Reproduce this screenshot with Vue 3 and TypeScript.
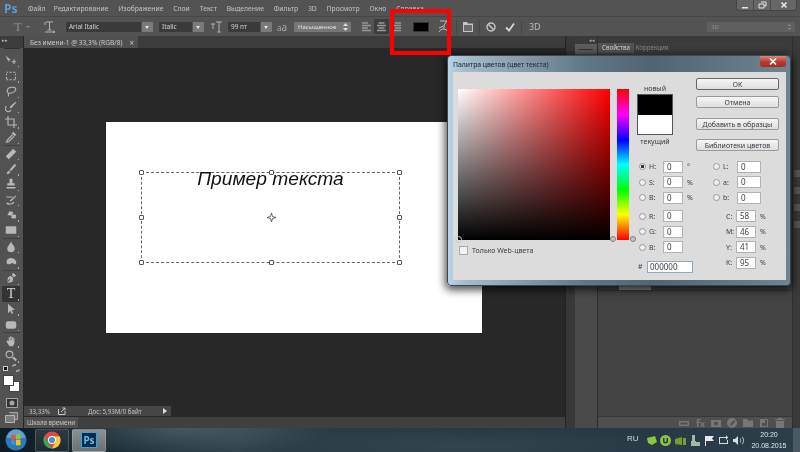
<template>
  <div class="ps">
    <header class="menubar">
      <span class="ps-logo">Ps</span>
      <nav class="menu">
        <span v-for="item in menuItems" :key="item">{{ item }}</span>
      </nav>
      <div class="win-btns">
        <span class="win-btn">
          <svg width="8" height="8" viewBox="0 0 8 8"><path d="M1 6h6v1.500H1z" fill="#e6e6e6" /></svg>
        </span>
        <span class="win-btn">
          <svg width="9" height="8" viewBox="0 0 9 8"><path d="M3 1h5v4H6.500M1 3h5v4H1z" fill="none" stroke="#e6e6e6" /></svg>
        </span>
        <span class="win-btn win-btn--wide">
          <svg width="8" height="8" viewBox="0 0 8 8"><path d="M1.500 1.500l5 5M6.500 1.500l-5 5" stroke="#e6e6e6" stroke-width="1.600" /></svg>
        </span>
      </div>
    </header>

    <div class="options">
      <span class="opt-t">T</span>
      <span class="opt-caret" />
      <svg class="opt-tt" width="12" height="12" viewBox="0 0 12 12">
        <path d="M2 1h7M5.500 1v8M3.500 9h4M1 1v3M1 11h10M9 9.500l2 1.500-2 1" fill="none" stroke="#b4b4b4" />
      </svg>
      <div class="combo combo--font"><span class="combo__val">Arial Italic</span><span class="combo__btn" /></div>
      <div class="combo combo--style"><span class="combo__val">Italic</span><span class="combo__btn" /></div>
      <svg class="opt-size" width="12" height="12" viewBox="0 0 12 12">
        <path d="M1 3h4M3 3v5M6 1h6M9 1v10M7.500 11h3" fill="none" stroke="#b4b4b4" />
      </svg>
      <div class="combo combo--size"><span class="combo__val">99 пт</span><span class="combo__btn" /></div>
      <span class="opt-aa">a<b>a</b></span>
      <div class="stepper">
        <span>Насыщенное</span>
        <svg width="5" height="8" viewBox="0 0 5 8"><path d="M2.500 0L5 3H0zM2.500 8L0 5h5z" fill="#ddd" /></svg>
      </div>
      <div class="aligns">
        <span v-for="(a, i) in aligns" :key="i" class="align" :class="{ 'align--on': i === 1 }">
          <svg width="9" height="10" viewBox="0 0 9 10"><path :d="a" fill="none" stroke="#999" stroke-width="1.500" /></svg>
        </span>
      </div>
      <span class="color-chip" />
      <svg class="opt-warp" width="11" height="13" viewBox="0 0 11 13">
        <path d="M2 1h7L6 5v4M1 12c2-4 7-4 9 0M5.500 6L1 8" fill="none" stroke="#bdbdbd" />
      </svg>
      <span class="opt-sep opt-sep--first" />
      <svg class="opt-panel" width="10" height="10" viewBox="0 0 10 10">
        <path d="M0 0h4l1 1.500h5V10H0z" fill="#c4c4c4" /><path d="M1 3h8v6H1z" fill="#6b6b6b" />
      </svg>
      <span class="opt-sep" />
      <svg class="opt-cancel" width="10" height="10" viewBox="0 0 10 10">
        <circle cx="5" cy="5" r="4" fill="none" stroke="#c8c8c8" stroke-width="1.400" /><path d="M2.300 2.300l5.400 5.400" stroke="#c8c8c8" stroke-width="1.400" />
      </svg>
      <svg class="opt-check" width="10" height="10" viewBox="0 0 10 10">
        <path d="M1 5.500l3 3L9 1.500" fill="none" stroke="#d4d4d4" stroke-width="1.800" />
      </svg>
      <span class="opt-sep opt-sep--last" />
      <span class="opt-3d">3D</span>
      <div class="stepper stepper--3d">
        <span>3D</span>
        <svg width="5" height="8" viewBox="0 0 5 8"><path d="M2.500 1L4.500 3H.5zM2.500 7L.5 5h4z" fill="#8a8a8a" /></svg>
      </div>
    </div>

    <div class="workspace">
      <aside class="tools">
        <span class="tools__arrows">▸▸</span>
        <span class="tools__grip" />
        <template v-for="tool in tools" :key="tool.id">
          <div class="tool" :class="{ 'tool--on': tool.id === 'type' }">
            <span v-if="tool.id === 'type'" class="tool__t">T</span>
            <svg v-else width="12" height="12" viewBox="0 0 16 16">
              <path :d="tool.fill" fill="#b8b8b8" />
              <path :d="tool.line" fill="none" stroke="#b8b8b8" stroke-width="1.500" />
            </svg>
            <i class="tool__more" />
          </div>
          <div v-if="tool.sep" class="tool-sep" />
        </template>
        <div class="swap">
          <span class="swap__mini" />
          <svg width="8" height="8" viewBox="0 0 8 8"><path d="M1 3V1h3M7 5v2H4M3 0v2M5 6v2" fill="none" stroke="#b8b8b8" /></svg>
        </div>
        <div class="swatches"><span class="swatches__bg" /><span class="swatches__fg" /></div>
        <svg class="mask" width="12" height="10" viewBox="0 0 12 10">
          <path d="M.5.500h11v9H.5z" fill="#333" stroke="#a5a5a5" /><circle cx="6" cy="5" r="2.500" fill="#a5a5a5" />
        </svg>
        <svg class="screen" width="13" height="11" viewBox="0 0 13 11">
          <path d="M4 .500h8.500v7H10" fill="#6c6c6c" stroke="#a8a8a8" /><path d="M.5 3.500h9v7h-9z" fill="#7c7c7c" stroke="#b4b4b4" />
        </svg>
      </aside>

      <main class="doc">
        <div class="tabbar">
          <div class="tab">
            <span>Без имени-1 @ 33,3% (RGB/8)</span>
            <span class="tab__x">×</span>
          </div>
        </div>
        <div class="canvas">
          <div class="page">
            <div class="textbox">
              <span class="textbox__text">Пример текста</span>
              <i v-for="h in handles" :key="h" class="handle" :class="`handle--${h}`" />
              <svg class="textbox__center" width="9" height="9" viewBox="0 0 9 9">
                <path d="M4.500 0L5.500 3.500 9 4.500 5.500 5.500 4.500 9 3.500 5.500 0 4.500 3.500 3.500z" fill="#fff" stroke="#444" stroke-width=".8" />
              </svg>
            </div>
          </div>
        </div>
        <div class="status">
          <div class="status__box">
            <span class="status__zoom">33,33%</span>
            <svg width="8" height="8" viewBox="0 0 8 8"><path d="M.5 2v5.500H7V4M3 5l4-4M4.500 1H7v2.500" fill="none" stroke="#c4c4c4" /></svg>
            <span class="status__info">Дос: 5,93M/0 байт</span>
            <span class="status__arrow" />
          </div>
        </div>
        <div class="timeline"><span class="timeline__tab">Шкала времени</span></div>
      </main>

      <div class="dock-gap" />

      <div class="strip">
        <span class="strip__arrows">◂◂</span>
        <div class="strip__btn"><span /></div>
      </div>

      <section class="panels">
        <div class="panels__head"><span>▸▸</span></div>
        <div class="panels__tabs">
          <span class="ptab ptab--on">Свойства</span>
          <span class="ptab">Коррекция</span>
          <span class="ptab__menu" />
        </div>
        <div class="panels__top"><span class="panels__grey" /></div>
        <div class="panels__body" />
        <div class="panels__foot">
          <svg v-for="(f, i) in footIcons" :key="i" width="10" height="10" viewBox="0 0 10 10">
            <path :d="f" fill="#777" />
          </svg>
        </div>
      </section>

      <div class="edge">
        <i v-for="n in 4" :key="n" />
      </div>
    </div>

    <footer class="taskbar">
      <svg class="orb" width="22" height="22" viewBox="0 0 22 22">
        <circle cx="11" cy="11" r="10.500" fill="#2c79b8" />
        <path d="M2 9a9 9 0 0 1 18 0z" fill="#8cc3e8" opacity=".55" />
        <path d="M6 6.500l4.400-1v5L6 11z" fill="#e8552b" />
        <path d="M11 5.400l4.500-1v5.300l-4.500.7z" fill="#8dc63f" />
        <path d="M6 11.600l4.400-.6v5l-4.400-.9z" fill="#2b9ce0" />
        <path d="M11 11l4.500-.6v5.800L11 16.200z" fill="#fbc117" />
      </svg>
      <div class="task task--chrome">
        <svg width="18" height="18" viewBox="0 0 18 18">
          <circle cx="9" cy="9" r="8.500" fill="#dd4b3e" />
          <path d="M1.700 4.700L6 13l3 4.500A8.500 8.500 0 0 1 1.700 4.700z" fill="#3aa757" />
          <path d="M9 5.500h7.800A8.500 8.500 0 0 1 9 17.500L13 10z" fill="#fcc934" />
          <circle cx="9" cy="9" r="4" fill="#fff" />
          <circle cx="9" cy="9" r="3.100" fill="#4a90d9" />
        </svg>
      </div>
      <div class="task task--ps"><span class="ps-tile">Ps</span></div>
      <div class="tray">
        <span class="tray__lang">RU</span>
        <svg v-for="t in trayIcons" :key="t.d" width="11" height="11" viewBox="0 0 11 11">
          <path :d="t.d" :fill="t.color" />
        </svg>
        <div class="clock"><span>20:20</span><span>20.08.2015</span></div>
      </div>
      <span class="show-desktop" />
    </footer>

    <!-- color picker window floats over the workspace -->
    <div class="dialog">
      <div class="dialog__title">
        <span>Палитра цветов (цвет текста)</span>
        <span class="dialog__close">
          <svg width="8" height="7" viewBox="0 0 8 7"><path d="M1 .5l6 6M7 .5l-6 6" stroke="#fff" stroke-width="1.700" /></svg>
        </span>
      </div>
      <div class="dialog__body">
        <div class="picker">
          <div class="picker__row">
            <div class="field"><i class="field__dot" /></div>
            <div class="hue" />
            <i class="hue__knob hue__knob--l" />
            <i class="hue__knob hue__knob--r" />
          </div>
          <label class="webonly"><i />Только Web-цвета</label>
        </div>
        <div class="side">
          <div class="side__top">
            <div class="compare">
              <span>новый</span>
              <div class="compare__box"><i /><i /></div>
              <span>текущий</span>
            </div>
            <div class="actions">
              <button class="btn btn--ok">OK</button>
              <button class="btn btn--cancel">Отмена</button>
              <button class="btn btn--add">Добавить в образцы</button>
              <button class="btn btn--lib">Библиотеки цветов</button>
            </div>
          </div>
          <div class="values">
            <div class="values__col">
              <div v-for="v in leftValues" :key="v.id" class="vrow" :class="{ 'vrow--gap': v.gap }">
                <i class="radio" :class="{ 'radio--on': v.id === 'H' }" />
                <span class="vrow__label">{{ v.label }}:</span>
                <span class="input">{{ v.value }}</span>
                <span class="vrow__unit">{{ v.unit }}</span>
              </div>
              <div class="vrow vrow--hex">
                <span class="vrow__hash">#</span>
                <span class="input input--hex">000000</span>
              </div>
            </div>
            <div class="values__col values__col--right">
              <div v-for="v in labValues" :key="v.label" class="vrow">
                <i class="radio" />
                <span class="vrow__label">{{ v.label }}:</span>
                <span class="input input--lab">{{ v.value }}</span>
              </div>
              <div
                v-for="(v, i) in cmykValues"
                :key="v.label"
                class="vrow vrow--cmyk"
                :class="{ 'vrow--gap': i === 0 }"
              >
                <span class="vrow__label">{{ v.label }}:</span>
                <span class="input input--cmyk">{{ v.value }}</span>
                <span class="vrow__unit">%</span>
              </div>
            </div>
          </div>
        </div>
      </div>
    </div>

    <div class="highlight" />
  </div>
</template>

<script setup lang="ts">
interface Tool {
  id: string
  fill: string
  line: string
  sep?: boolean
}

const menuItems = [
  'Файл',
  'Редактирование',
  'Изображение',
  'Слои',
  'Текст',
  'Выделение',
  'Фильтр',
  '3D',
  'Просмотр',
  'Окно',
  'Справка',
]

const aligns = [
  'M0 1h6M0 3.500h9M0 6h6M0 8.500h9',
  'M1.500 1h6M0 3.500h9M1.500 6h6M0 8.500h9',
  'M3 1h6M0 3.500h9M3 6h6M0 8.500h9',
]

const tools: Tool[] = [
  { id: 'move', fill: 'M1 1l7 5.500-3 .5 0 3z', line: 'M9 9h6M12 6v6' },
  { id: 'marquee', fill: '', line: 'M2 3h2M6 3h3M11 3h3M14 5v2M14 9v3M2 5v2M2 9v3M2 13h2M6 13h3M11 13h3' },
  { id: 'lasso', fill: '', line: 'M3 8c0-3 3-5 7-5s5 2 4 4-5 4-8 4-3-1-3-3zM5 11c-1 2-1 3 0 4' },
  { id: 'quick', fill: 'M14 1l1 1-7 8-2-2z', line: 'M2 7a4 4 0 1 0 6 5' },
  { id: 'crop', fill: '', line: 'M4 0v12h12M0 4h12v12' },
  { id: 'dropper', fill: 'M11 1l4 4-2 2-4-4z', line: 'M10 5L3 12l-1 3 3-1 7-7', sep: true },
  { id: 'heal', fill: 'M11 1l4 4-10 10-4-4z', line: '' },
  { id: 'brush', fill: 'M13 1l2 2-7 8-2-2zM5 10l2 2-1 2-4 1 1-3z', line: '' },
  { id: 'stamp', fill: 'M6 1h4v6h3v3H3V7h3zM2 12h12v2H2z', line: '' },
  { id: 'history', fill: 'M14 2l1 1-7 7-2-1z', line: 'M2 4h8M3 12c3 2 6 2 9-1M5 14l-3-2' },
  { id: 'eraser', fill: 'M6 3l5 1-2 5-6-1zM10 7l5 1-1 5-6-1z', line: '' },
  { id: 'gradient', fill: 'M1 3h14v10H1z', line: '', sep: true },
  { id: 'blur', fill: 'M8 1c2 4 5 6 5 9a5 5 0 0 1-10 0c0-3 3-5 5-9z', line: '' },
  { id: 'dodge', fill: 'M2 8c0-4 4-6 8-5s5 4 5 6-2 3-4 1-3 1-5 1-4 0-4-3z', line: '', sep: true },
  { id: 'pen', fill: 'M11 1l4 4-3 2-3-3zM8 5l3 3-1 5-7 2 4-5-1-1-3 4 1-6z', line: '' },
  { id: 'type', fill: '', line: '' },
  { id: 'path', fill: 'M4 1l9 8-4 .5 2 4-2 1-2-4-3 3z', line: '' },
  { id: 'shape', fill: 'M4 3h8a3 3 0 0 1 3 3v4a3 3 0 0 1-3 3H4a3 3 0 0 1-3-3V6a3 3 0 0 1 3-3z', line: '', sep: true },
  { id: 'hand', fill: 'M3 7l2 1V3h1.500v4H7V1.500h1.500V7H9V2.500h1.500V7h.5V4h1.500v7l-2 4H6L2 9z', line: '' },
  { id: 'zoom', fill: 'M10 10l2-1 4 4-2 2-4-4z', line: 'M10.500 6a4.500 4.500 0 1 1-9 0 4.500 4.500 0 0 1 9 0z' },
]

const handles = ['tl', 'tc', 'tr', 'ml', 'mr', 'bl', 'bc', 'br']

const footIcons = [
  'M0 3h5v1.500H1.500v2H5V8H0zM5 3h5v5H5V6.500h3.500v-2H5z',
  'M2 1h4v1H3.500v2H5v1H3.500v4H2V5H1V4h1zM5 4h1.500l1 1.500L8.500 4H10L8.300 6.500 10 9H8.500l-1-1.500L6.500 9H5l1.700-2.500z',
  'M0 2h10v7H0zM5 3.500a2 2 0 1 0 0 4 2 2 0 0 0 0-4z',
  'M5 0a5 5 0 1 1 0 10A5 5 0 0 1 5 0zm2 2L3 6l1 2 4-4z',
  'M0 1h4l1 1.500h5V9H0z',
  'M1 1h8v8H1zM6 2v3H3v3h5V2z',
  'M3 0h4v1h3v1H0V1h3zM1 3h8v7H1z',
]

const trayIcons = [
  { d: 'M1 3l8-2 2 6-5 3-4-2z', color: '#8cc63f' },
  { d: 'M5.500 0a5.500 5.500 0 1 1 0 11 5.500 5.500 0 0 1 0-11zM3 3v3a2.500 2.500 0 0 0 5 0V3H6.500v3a1 1 0 0 1-2 0V3z', color: '#8cc63f' },
  { d: 'M0 4l7-2v8l-7-1zM8 3h3v7H8z', color: '#7c9a2f' },
  { d: 'M3 0h3v6H3zM2 6h5v5H2zM7 7h4v4H7z', color: '#a5b8a5' },
  { d: 'M1 1h1v10H1zM2 1h8L8 3.500 10 6H2z', color: '#e4e8ea' },
  { d: 'M1 2h9v1H2v5h7V5h1v4H1zM8 0l2 2.500L8 5z', color: '#d6dde0' },
  { d: 'M0 4h2l3-3v9L2 7H0zM7 3c1.500 1 1.500 4 0 5V7c.7-.5.7-2.500 0-3zM9 1.500c2.500 2 2.500 6 0 8V8.500c1.500-1.500 1.500-4.500 0-6z', color: '#d6dde0' },
]

const leftValues = [
  { id: 'H', label: 'H', value: '0', unit: '°', gap: false },
  { id: 'S', label: 'S', value: '0', unit: '%', gap: false },
  { id: 'Br', label: 'B', value: '0', unit: '%', gap: false },
  { id: 'R', label: 'R', value: '0', unit: '', gap: true },
  { id: 'G', label: 'G', value: '0', unit: '', gap: false },
  { id: 'Bl', label: 'B', value: '0', unit: '', gap: false },
]

const labValues = [
  { label: 'L', value: '0' },
  { label: 'a', value: '0' },
  { label: 'b', value: '0' },
]

const cmykValues = [
  { label: 'C', value: '58' },
  { label: 'M', value: '46' },
  { label: 'Y', value: '41' },
  { label: 'K', value: '95' },
]
</script>

<style>
html,
body {
  margin: 0;
  background: #222;
}
</style>

<style scoped>
.ps {
  position: relative;
  width: 800px;
  height: 452px;
  overflow: hidden;
  display: flex;
  flex-direction: column;
  background: #535353;
  font-family: 'Noto Sans', 'Liberation Sans', sans-serif;
  font-size: 7px;
  color: #c4c4c4;
  filter: blur(0.35px);
}

/* menu */
.menubar {
  height: 16px;
  flex: none;
  display: flex;
  align-items: center;
  background: #535353;
  padding-left: 4px;
}

.ps-logo {
  width: 24px;
  font-size: 12px;
  font-weight: 700;
  color: #5e9cd0;
}

.menu {
  display: flex;
  gap: 9.800px;
  font-size: 6.800px;
}

.menu span:first-child {
  margin-right: -1.500px;
}

.win-btns {
  margin-left: auto;
  align-self: flex-start;
  display: flex;
  margin-right: 3px;
  background: #666;
  border: 1px solid #444;
  border-top: 0;
  border-radius: 0 0 3px 3px;
  height: 10px;
}

.win-btn {
  width: 16px;
  display: flex;
  align-items: center;
  justify-content: center;
  border-right: 1px solid #4a4a4a;
}

.win-btn--wide {
  width: 25px;
  border-right: 0;
}

/* options bar */
.options {
  height: 20px;
  flex: none;
  display: flex;
  align-items: center;
  background: #535353;
  border-top: 1px solid #474747;
  box-sizing: border-box;
  position: relative;
}

.opt-t {
  margin-left: 14px;
  font-family: 'Liberation Serif', serif;
  font-size: 13px;
  color: #8e8e8e;
}

.opt-caret {
  margin-left: 4px;
  border: 2px solid transparent;
  border-top: 2.500px solid #888;
  margin-top: 2px;
}

.opt-tt {
  margin-left: 14px;
}

.combo {
  display: flex;
  height: 10px;
  border-radius: 1px;
  overflow: hidden;
}

.combo__val {
  flex: 1;
  background: #3a3a3a;
  color: #d4d4d4;
  font-size: 6.500px;
  line-height: 10px;
  padding-left: 3px;
}

.combo__btn {
  width: 11px;
  background: #7a7a7a;
  position: relative;
  margin-left: 1px;
}

.combo__btn::after {
  content: '';
  position: absolute;
  left: 3px;
  top: 4px;
  border: 2.500px solid transparent;
  border-top: 3px solid #e4e4e4;
}

.combo--font {
  width: 87px;
  margin-left: 10px;
}

.combo--style {
  width: 45px;
  margin-left: 6px;
}

.opt-size {
  margin-left: 6px;
}

.combo--size {
  width: 44px;
  margin-left: 6px;
}

.opt-aa {
  width: 11px;
  margin-left: 5px;
  font-size: 8px;
  color: #a9a9a9;
}

.opt-aa b {
  font-size: 10px;
  font-weight: 400;
}

.stepper {
  width: 57px;
  height: 10px;
  margin-left: 6px;
  padding: 0 3px 0 4px;
  box-sizing: border-box;
  display: flex;
  align-items: center;
  justify-content: space-between;
  background: #767676;
  border-radius: 1px;
  color: #e0e0e0;
  font-size: 6px;
}

.aligns {
  display: flex;
  margin-left: 8px;
  gap: 0;
}

.align {
  width: 15px;
  height: 15px;
  display: flex;
  align-items: center;
  justify-content: center;
}

.align--on {
  background: #3d3d3d;
}

.color-chip {
  width: 16px;
  height: 10px;
  margin-left: 9px;
  background: #000;
  border: 1px solid #333;
  box-sizing: border-box;
}

.opt-warp {
  margin-left: 9px;
}

.opt-sep {
  width: 1px;
  height: 14px;
  margin: 0 6px;
  background: #474747;
}

.opt-sep--first {
  margin-left: 7px;
}

.opt-check {
  margin-left: 9px;
}

.opt-3d {
  color: #bcbcbc;
  font-size: 9px;
  margin-left: 1px;
}

.stepper--3d {
  width: 88px;
  margin-left: auto;
  margin-right: 5px;
  background: #5f5f5f;
  color: #8c8c8c;
}

/* main row */
.workspace {
  flex: 1;
  min-height: 0;
  display: flex;
  background: #3a3a3a;
}

.tools {
  width: 23px;
  flex: none;
  display: flex;
  flex-direction: column;
  align-items: center;
  background: #525252;
  border-right: 1px solid #262626;
  box-shadow: inset 0 12px 0 #3c3c3c;
}

.tools__arrows {
  height: 9px;
  line-height: 9px;
  font-size: 5px;
  color: #bbb;
  align-self: flex-start;
  padding-left: 2px;
}

.tools__grip {
  width: 16px;
  height: 1px;
  margin: 3px 0 4px;
  background: #303030;
}

.tool {
  width: 18px;
  height: 15.350px;
  flex: none;
  position: relative;
  display: flex;
  align-items: center;
  justify-content: center;
  margin-left: -1px;
}

.tool--on {
  background: #333;
  border-radius: 1px;
}

.tool__t {
  font-family: 'Liberation Serif', serif;
  font-size: 14px;
  line-height: 1;
  color: #d8d8d8;
}

.tool__more {
  position: absolute;
  right: 1px;
  bottom: 1px;
  width: 1.500px;
  height: 1.500px;
  background: #aaa;
}

.tool-sep {
  width: 17px;
  height: 1px;
  flex: none;
  background: #404040;
}

.swap {
  width: 17px;
  height: 9px;
  display: flex;
  justify-content: space-between;
  align-items: center;
}

.swap__mini {
  width: 5px;
  height: 5px;
  background: #111;
  border: 1px solid #ccc;
  box-sizing: border-box;
}

.swatches {
  width: 17px;
  height: 17px;
  margin-top: 2px;
  position: relative;
}

.swatches span {
  position: absolute;
  width: 11px;
  height: 11px;
  background: #fff;
  border: 1px solid #444;
  box-sizing: border-box;
}

.swatches__fg {
  left: 0;
  top: 0;
}

.swatches__bg {
  right: 0;
  bottom: 0;
}

.mask {
  margin-top: 6px;
}

.screen {
  margin-top: 4px;
}

/* document */
.doc {
  width: 541px;
  flex: none;
  display: flex;
  flex-direction: column;
  background: #282828;
}

.tabbar {
  height: 12px;
  flex: none;
  background: #3c3c3c;
}

.tab {
  width: 114px;
  height: 12px;
  padding: 0 3px 0 6px;
  box-sizing: border-box;
  display: flex;
  align-items: center;
  justify-content: space-between;
  background: #505050;
  color: #c9c9c9;
  font-size: 6.600px;
  white-space: nowrap;
}

.tab__x {
  font-size: 8px;
  margin-right: 1px;
}

.canvas {
  flex: 1;
  min-height: 0;
  padding: 74px 0 0 82px;
}

.page {
  position: relative;
  width: 376px;
  height: 211px;
  background: #fff;
}

.textbox {
  position: absolute;
  left: 35px;
  top: 50px;
  width: 259px;
  height: 91px;
  box-sizing: border-box;
  border: 1px dashed #666;
  text-align: center;
}

.textbox__text {
  display: block;
  margin-top: -6px;
  font-family: 'Liberation Sans', Arial, sans-serif;
  font-style: italic;
  font-size: 19.200px;
  line-height: 24px;
  color: #111;
}

.textbox__center {
  position: absolute;
  left: 125px;
  top: 40px;
}

.handle {
  position: absolute;
  width: 5px;
  height: 5px;
  box-sizing: border-box;
  background: #fff;
  border: 1px solid #555;
  border-radius: 1px;
}

.handle--tl { left: -3px; top: -3px; }
.handle--tc { left: 127px; top: -3px; }
.handle--tr { right: -3px; top: -3px; }
.handle--ml { left: -3px; top: 42px; }
.handle--mr { right: -3px; top: 42px; }
.handle--bl { left: -3px; bottom: -3px; }
.handle--bc { left: 127px; bottom: -3px; }
.handle--br { right: -3px; bottom: -3px; }

.status {
  height: 10px;
  flex: none;
  margin-bottom: 1px;
  display: flex;
}

.status__box {
  width: 147px;
  display: flex;
  align-items: center;
  background: #464646;
  padding-left: 5px;
  box-sizing: border-box;
  font-size: 6.200px;
  position: relative;
}

.status__box svg {
  margin-left: 8px;
}

.status__info {
  margin-left: 22px;
}

.status__arrow {
  position: absolute;
  right: 1px;
  top: 2px;
  border: 3px solid transparent;
  border-left: 4px solid #ddd;
}

.timeline {
  height: 11px;
  flex: none;
  background: #404040;
}

.timeline__tab {
  display: inline-block;
  width: 54px;
  height: 11px;
  line-height: 11px;
  text-align: center;
  background: #505050;
  font-size: 6.200px;
  color: #c9c9c9;
  white-space: nowrap;
}

.dock-gap {
  width: 10px;
  flex: none;
  background: #383838;
  border-left: 1px solid #222;
  box-sizing: border-box;
}

.strip {
  width: 23px;
  flex: none;
  background: #4a4a4a;
  border-right: 1px solid #2c2c2c;
  box-sizing: border-box;
  box-shadow: inset 0 8px 0 #3a3a3a;
}

.strip__arrows {
  display: block;
  height: 8px;
  line-height: 8px;
  text-align: right;
  padding-right: 2px;
  font-size: 5px;
  color: #aaa;
}

.strip__btn {
  height: 10px;
  background: #5c5c5c;
  display: flex;
  align-items: center;
  justify-content: center;
}

.strip__btn span {
  width: 14px;
  height: 1px;
  background: #333;
}

.panels {
  flex: 1;
  min-width: 0;
  display: flex;
  flex-direction: column;
  background: #434343;
}

.panels__head {
  height: 7px;
  flex: none;
  background: #3a3a3a;
  line-height: 8px;
  text-align: right;
  font-size: 5px;
  color: #aaa;
  margin-right: -7px;
}

.panels__tabs {
  height: 10px;
  flex: none;
  display: flex;
  align-items: stretch;
  background: #3c3c3c;
  position: relative;
}

.ptab {
  width: 36px;
  text-align: center;
  line-height: 10px;
  font-size: 6.200px;
  color: #8c8c8c;
  white-space: nowrap;
}

.ptab--on {
  background: #535353;
  color: #d8d8d8;
}

.panels__top {
  height: 238px;
  flex: none;
  display: flex;
  align-items: flex-end;
  border-bottom: 1px solid #363636;
  box-sizing: border-box;
  padding-left: 21px;
}

.panels__grey {
  width: 32px;
  height: 6px;
  background: #8a8a8a;
}

.panels__body {
  flex: 1;
}

.panels__foot {
  height: 11px;
  flex: none;
  display: flex;
  align-items: center;
  justify-content: flex-end;
  gap: 6px;
  padding-right: 7px;
  background: #4f4f4f;
  border-top: 1px solid #383838;
}

.edge {
  width: 8px;
  flex: none;
  background: #3a3a3a;
  padding-top: 134px;
  box-sizing: border-box;
  display: flex;
  flex-direction: column;
  gap: 10px;
  align-items: center;
  border-left: 1px solid #2e2e2e;
}

.edge i {
  width: 6px;
  height: 7px;
  background: #565656;
}

/* windows taskbar */
.taskbar {
  height: 24px;
  flex: none;
  display: flex;
  align-items: center;
  position: relative;
  background:
    radial-gradient(ellipse 150px 30px at 180px 0, rgba(130, 150, 160, 0.35), transparent),
    radial-gradient(ellipse 200px 26px at 470px 18px, rgba(90, 115, 125, 0.3), transparent),
    linear-gradient(90deg, #0e1b24 0, #1a2a33 14%, #2d3f49 30%, #21323c 60%, #2b3f4b 100%);
}

.orb {
  margin-left: 5px;
  flex: none;
}

.task {
  width: 34px;
  height: 23px;
  display: flex;
  align-items: center;
  justify-content: center;
  box-sizing: border-box;
  border: 1px solid rgba(255, 255, 255, 0.18);
  border-radius: 2px;
}

.task--chrome {
  margin-left: 8px;
  background: linear-gradient(#2c3a42, #1f2b32);
}

.task--ps {
  margin-left: 3px;
  background: linear-gradient(#8b9094, #6b7075);
}

.ps-tile {
  width: 16px;
  height: 16px;
  box-sizing: border-box;
  border: 1px solid #2aa7e0;
  background: #0a2a44;
  color: #5ec0ee;
  font-size: 10px;
  font-weight: 700;
  line-height: 14px;
  text-align: center;
}

.tray {
  margin-left: auto;
  display: flex;
  align-items: center;
  gap: 3.500px;
  margin-right: 6px;
}

.tray__lang {
  width: 15px;
  font-family: 'Liberation Sans', sans-serif;
  font-size: 8px;
  color: #d2d8dc;
  margin-top: -3px;
}

.clock {
  width: 50px;
  margin-left: -3px;
  display: flex;
  flex-direction: column;
  align-items: center;
  line-height: 11px;
  font-family: 'Liberation Sans', sans-serif;
  font-size: 7px;
  color: #e4e8ea;
}

.show-desktop {
  width: 7px;
  height: 24px;
  background: #4a5a64;
  position: absolute;
  right: 0;
  top: 0;
}

/* color picker */
.dialog {
  position: absolute;
  left: 447px;
  top: 55px;
  width: 344px;
  height: 231px;
  box-sizing: border-box;
  display: flex;
  flex-direction: column;
  padding: 0 4px 5px 5px;
  border-radius: 4px;
  border: 1px solid #3a4650;
  background: linear-gradient(90deg, #b7d4ea 0, #a5bccb 5%, #627786 40%, #51646f 60%, #708390 100%);
  box-shadow: 0 2px 8px 2px rgba(0, 0, 0, 0.7);
}

.dialog__title {
  height: 16px;
  flex: none;
  display: flex;
  align-items: center;
  font-size: 6.800px;
  color: #16202a;
}

.dialog__close {
  width: 26px;
  height: 11px;
  margin: -5px 0 0 auto;
  display: flex;
  align-items: center;
  justify-content: center;
  background: linear-gradient(#d8897f, #b8382e 55%, #a92b22);
  border-radius: 0 0 3px 3px;
}

.dialog__body {
  flex: 1;
  display: flex;
  background: #dcdcdc;
  color: #38404a;
  font-size: 7px;
  padding-left: 5px;
}

.picker {
  width: 171px;
  flex: none;
  padding-top: 17px;
}

.picker__row {
  position: relative;
  display: flex;
  gap: 7px;
}

.field {
  position: relative;
  width: 152px;
  height: 151px;
  background:
    linear-gradient(to top, #000, transparent),
    linear-gradient(to right, #fff, #f00);
}

.field__dot {
  position: absolute;
  left: -3px;
  bottom: -3px;
  width: 7px;
  height: 7px;
  box-sizing: border-box;
  border: 1px solid #ccc;
  border-radius: 50%;
}

.hue {
  width: 12px;
  height: 151px;
  background: linear-gradient(#f00, #f0f 17%, #00f 34%, #0ff 50%, #0f0 67%, #ff0 83%, #f00);
}

.hue__knob {
  position: absolute;
  top: 147px;
  width: 6px;
  height: 6px;
  border-radius: 50%;
  background: #c4c4c4;
  border: 1px solid #808080;
  box-sizing: border-box;
}

.hue__knob--l {
  left: 152px;
}

.hue__knob--r {
  left: 172px;
}

.webonly {
  display: flex;
  align-items: center;
  gap: 4px;
  margin-top: 6px;
  padding-left: 1px;
}

.webonly i {
  width: 7px;
  height: 7px;
  background: #f2f2f2;
  border: 1px solid #aaa;
}

.side {
  width: 143px;
  margin-left: 8px;
  flex: none;
}

.side__top {
  height: 87px;
  padding-top: 6px;
  box-sizing: border-box;
  display: flex;
}

.compare {
  width: 36px;
  padding-top: 6px;
  display: flex;
  flex-direction: column;
  align-items: center;
  line-height: 9px;
  white-space: nowrap;
}

.compare__box {
  width: 36px;
  height: 41px;
  margin: 1px 0 2px;
  flex: none;
  box-sizing: border-box;
  border: 1px solid #555;
}

.compare__box i {
  display: block;
  height: 19.500px;
  background: #000;
}

.compare__box i + i {
  background: #fff;
}

.actions {
  width: 83px;
  margin-left: 23px;
  display: flex;
  flex-direction: column;
}

.btn {
  height: 12px;
  padding: 0;
  flex: none;
  background: linear-gradient(#f6f6f6, #dedede);
  border: 1px solid #9a9a9a;
  border-radius: 2px;
  font: inherit;
  line-height: 9px;
  color: #333b44;
  white-space: nowrap;
}

.btn--ok {
  border-color: #666;
}

.btn--cancel {
  margin-top: 6px;
}

.btn--add {
  margin-top: 10px;
}

.btn--lib {
  margin-top: 9px;
}

.values {
  display: flex;
}

.values__col {
  width: 74px;
  flex: none;
}

.vrow {
  position: relative;
  height: 15.500px;
  display: flex;
  align-items: center;
}

.vrow--gap {
  margin-top: 3px;
}

.vrow--hex {
  margin-top: 4px;
}

.vrow--cmyk {
  padding-left: 15px;
}

.radio {
  width: 7px;
  height: 7px;
  flex: none;
  box-sizing: border-box;
  border: 1px solid #999;
  border-radius: 50%;
  background: #f0f0f0;
  margin-left: 2px;
}

.radio--on {
  background: radial-gradient(circle, #333 0 1.500px, #f0f0f0 2px);
}

.vrow__label {
  width: 17px;
  flex: none;
  padding-left: 3px;
  box-sizing: border-box;
}

.vrow__hash {
  width: 10px;
  padding-left: 1px;
  box-sizing: border-box;
}

.input {
  width: 20px;
  height: 12px;
  flex: none;
  box-sizing: border-box;
  padding-left: 3px;
  font-size: 8px;
  line-height: 10px;
  background: #fff;
  border: 1px solid #b2b2b2;
}

.input--hex {
  width: 46px;
  border-color: #8ea8c0;
  padding-left: 2px;
}

.input--lab {
  width: 24px;
}

.vrow__unit {
  margin-left: 4px;
}

.vrow--cmyk .vrow__label {
  padding-left: 0;
  width: 10px;
}

/* annotation drawn on the screenshot */
.highlight {
  position: absolute;
  left: 390px;
  top: 9px;
  width: 61px;
  height: 46px;
  box-sizing: border-box;
  border: 4px solid #ff0000;
}
</style>
